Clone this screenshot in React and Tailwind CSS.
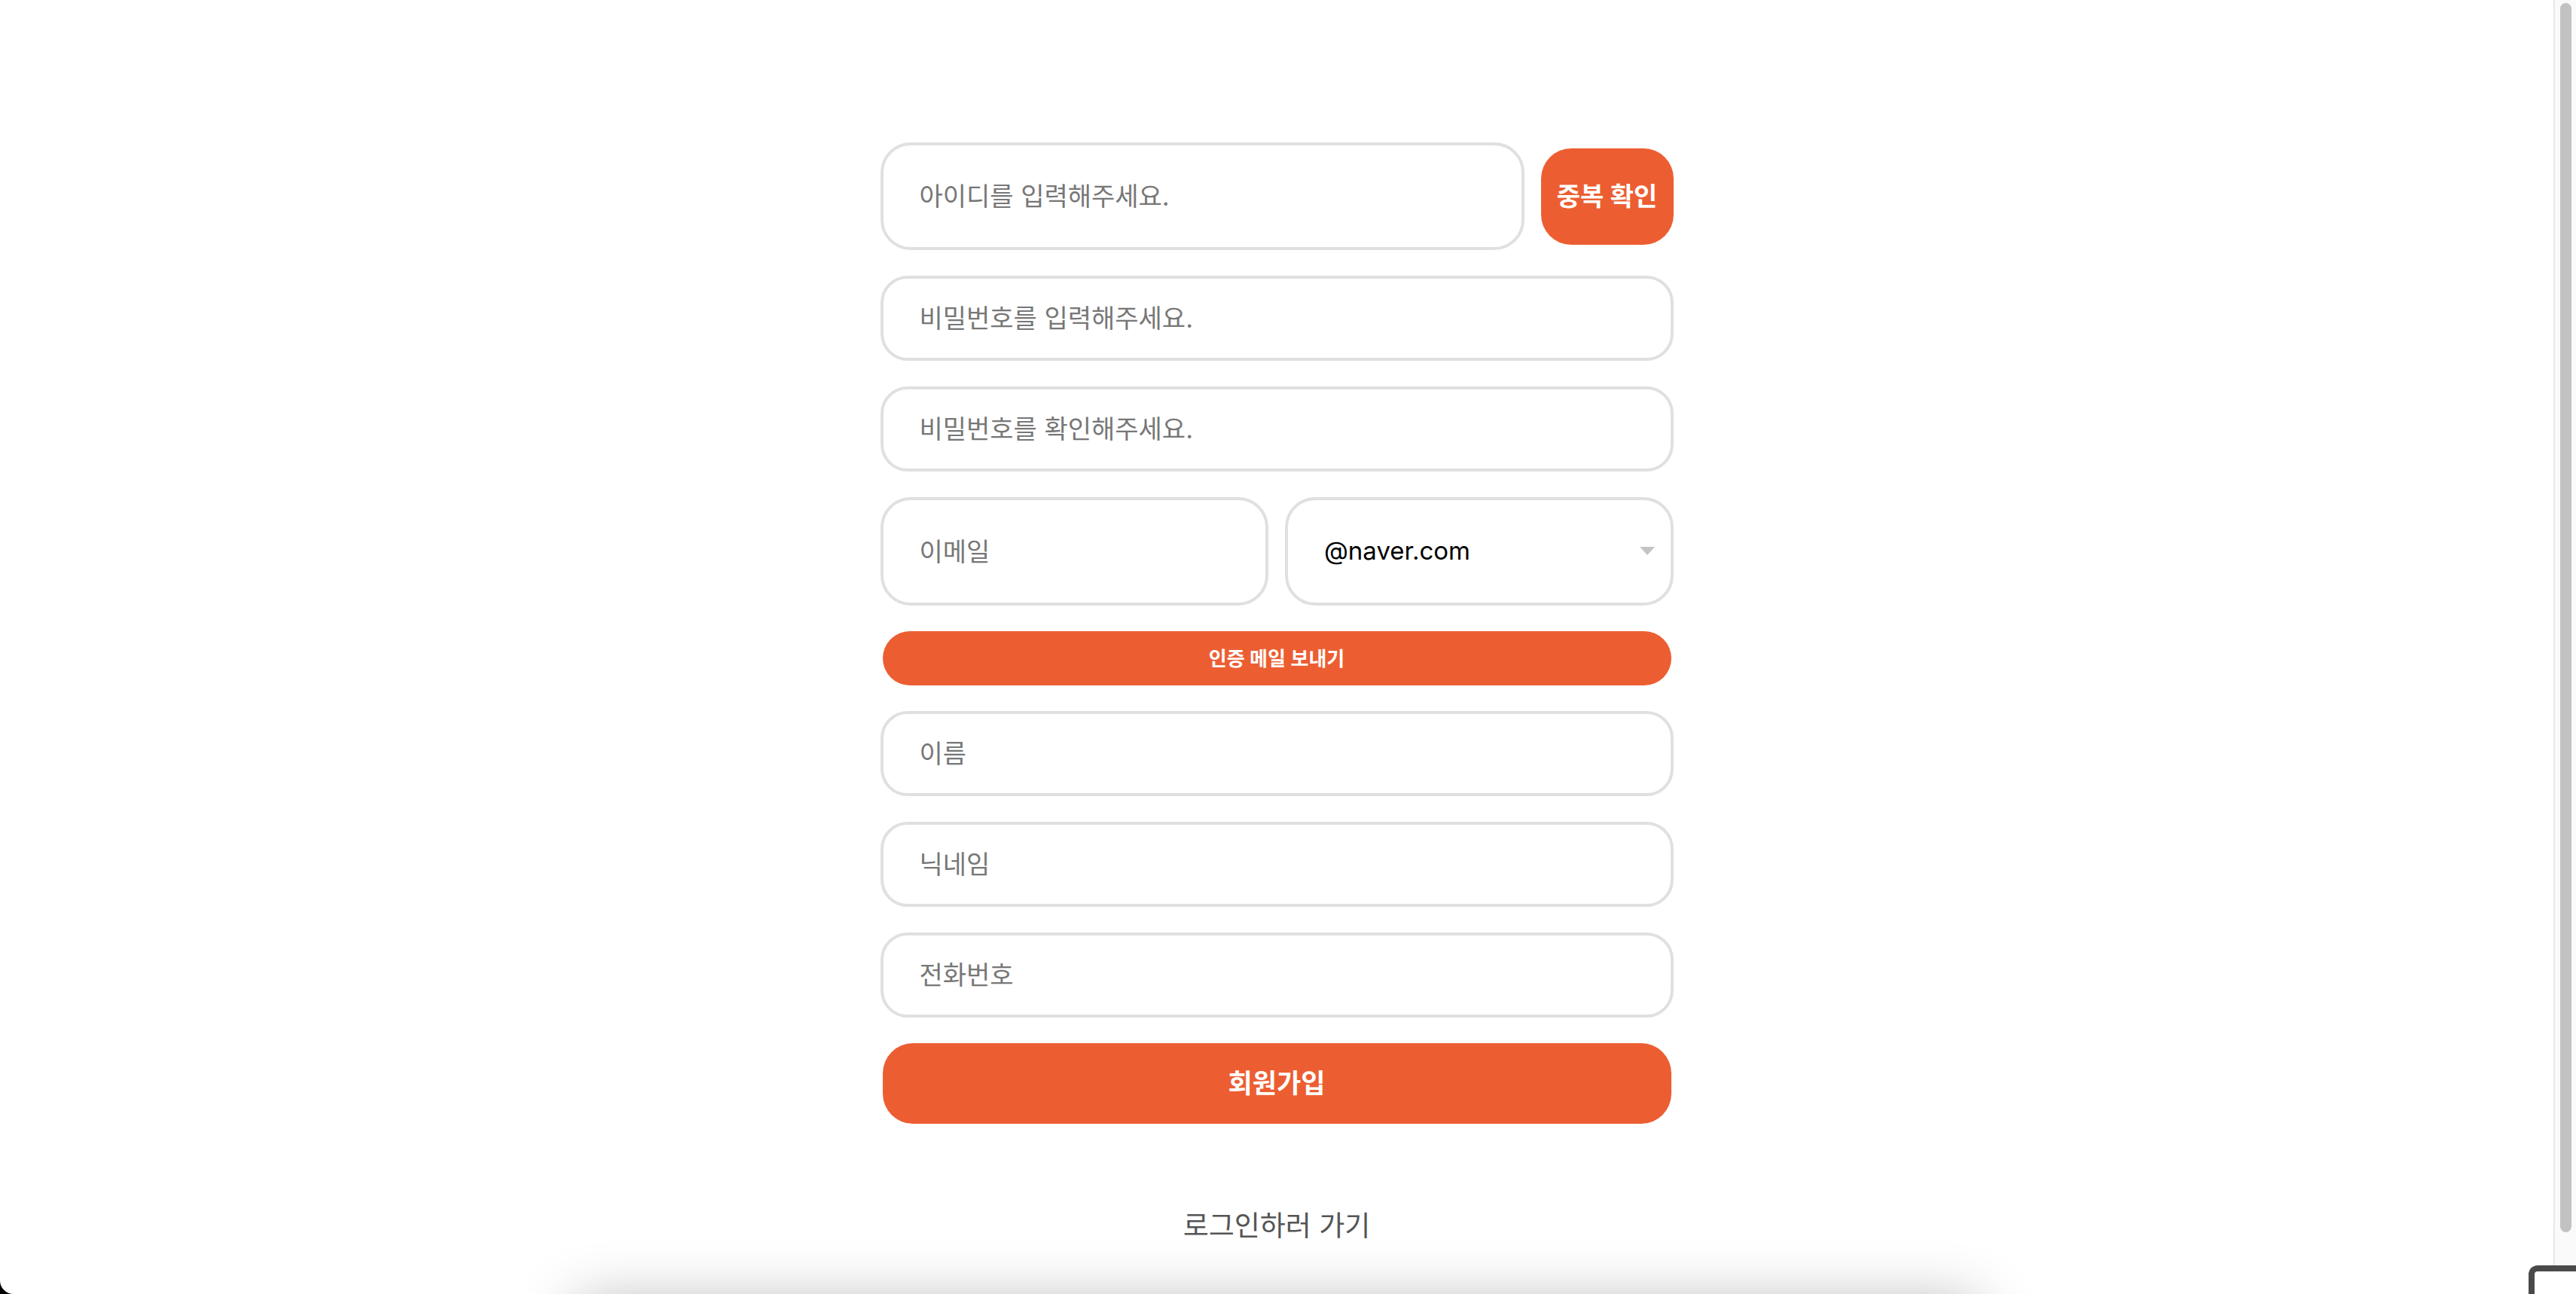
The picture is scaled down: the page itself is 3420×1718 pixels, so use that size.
import React from 'react';

const fieldClass =
    'w-full h-[113px] rounded-[36px] border-4 border-[#e0e0e0] bg-white px-[48px] text-[34px] text-black outline-none placeholder:text-[#777777]';

const SignUp = () => {
    return (
        <div className="h-[1718px] w-full overflow-hidden bg-black font-['Inter','Noto_Sans_CJK_KR',sans-serif]">
            <div className="relative flex h-full w-full rounded-bl-[18px] bg-white">
                {/* main column */}
                <div className="flex h-full flex-1 flex-col items-center overflow-hidden pt-[189px]">
                    <form className="flex w-[1053px] flex-col gap-[34px]" onSubmit={e => e.preventDefault()}>
                        {/* id + duplicate check */}
                        <div className="flex h-[143px] items-center gap-[22px]">
                            <input
                                type="text"
                                placeholder="아이디를 입력해주세요."
                                className="h-full flex-1 rounded-[40px] border-4 border-[#e0e0e0] bg-white px-[48px] text-[34px] text-black outline-none placeholder:text-[#777777]"
                            />
                            <button
                                type="button"
                                className="h-[128px] w-[176px] rounded-[40px] bg-[#ec5e32] text-[34px] font-semibold text-white"
                            >
                                중복 확인
                            </button>
                        </div>

                        <input type="password" placeholder="비밀번호를 입력해주세요." className={fieldClass} />
                        <input type="password" placeholder="비밀번호를 확인해주세요." className={fieldClass} />

                        {/* email */}
                        <div className="grid h-[144px] grid-cols-2 gap-[22px]">
                            <input
                                type="text"
                                placeholder="이메일"
                                className="h-full w-full rounded-[40px] border-4 border-[#e0e0e0] bg-white px-[48px] text-[34px] text-black outline-none placeholder:text-[#777777]"
                            />
                            <div className="relative h-full">
                                <select
                                    defaultValue="naver"
                                    className="h-full w-full appearance-none rounded-[40px] border-4 border-[#e0e0e0] bg-white px-[48px] text-[33px] text-black outline-none"
                                >
                                    <option value="naver">@naver.com</option>
                                    <option value="gmail">@gmail.com</option>
                                    <option value="daum">@daum.net</option>
                                </select>
                                <svg
                                    className="pointer-events-none absolute right-[25px] top-[66px]"
                                    width="20"
                                    height="11"
                                    viewBox="0 0 20 11"
                                >
                                    <path d="M0 0 L20 0 L10 11 Z" fill="#c4c4c4" />
                                </svg>
                            </div>
                        </div>

                        <button
                            type="button"
                            className="mx-[3px] h-[72px] rounded-full bg-[#ec5e32] text-[26px] font-semibold text-white"
                        >
                            인증 메일 보내기
                        </button>

                        <input type="text" placeholder="이름" className={fieldClass} />
                        <input type="text" placeholder="닉네임" className={fieldClass} />
                        <input type="tel" placeholder="전화번호" className={fieldClass} />

                        <button
                            type="submit"
                            className="mx-[3px] h-[107px] rounded-[40px] bg-[#ec5e32] text-[35px] font-semibold text-white"
                        >
                            회원가입
                        </button>
                    </form>

                    <a href="#" className="mt-[114px] text-[37px] leading-[44px] text-[#555555]">
                        로그인하러 가기
                    </a>

                    {/* bottom bar just below the fold, only its shadow shows */}
                    <div className="mt-[81px] h-[200px] w-[1860px] shrink-0 bg-white shadow-[0_0_80px_rgba(0,0,0,0.3)]" />
                </div>

                {/* scrollbar */}
                <div className="flex h-full w-[30px] shrink-0 justify-center border-l-2 border-[#e8e8e8] bg-[#fafafa] pt-[4px]">
                    <div className="h-[1632px] w-[15px] rounded-full bg-[#c2c2c2]" />
                </div>

                {/* corner widget */}
                <div className="absolute bottom-0 right-0 h-[38px] w-[63px] rounded-tl-[12px] border-l-8 border-t-8 border-[#4a4a4a] bg-white" />
            </div>
        </div>
    );
};

export default function App() {
    return <SignUp />;
}
